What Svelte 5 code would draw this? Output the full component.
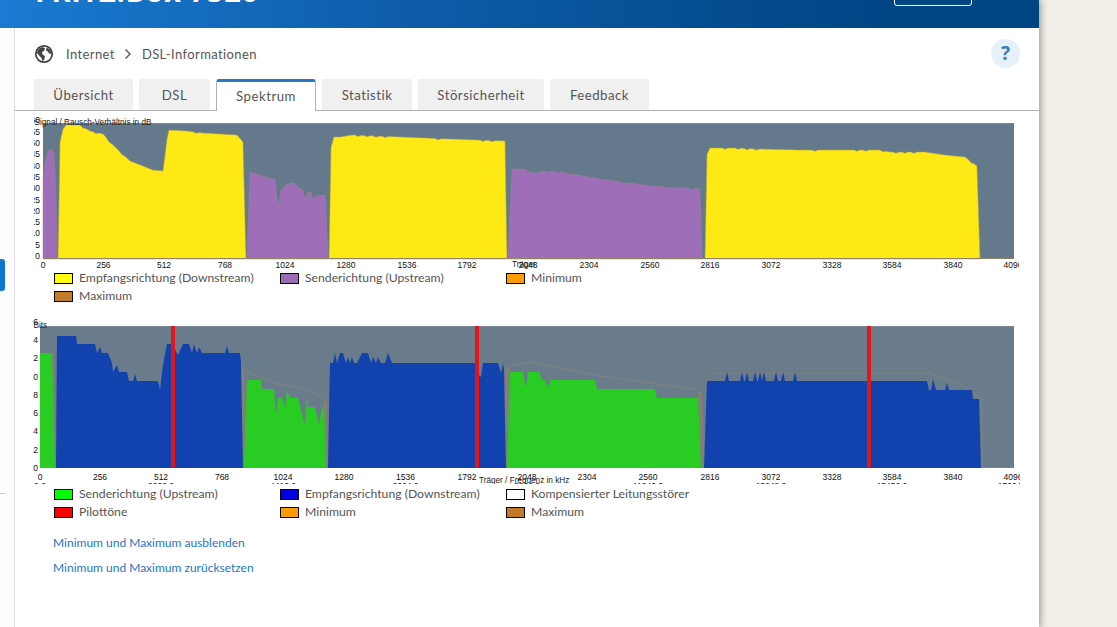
<script>
  // All chart coordinates are page pixels; each svg's viewBox maps them 1:1.
  const spikes = (list, base, top) =>
    list.flatMap((x) => [[x - 2, base], [x, top], [x + 2, base]]);

  // Adds the occasional small notch seen on the signal/noise curves
  function rough(points) {
    const out = [];
    let s = 7;
    for (let i = 0; i < points.length - 1; i++) {
      const [x0, y0] = points[i];
      const [x1, y1] = points[i + 1];
      out.push([x0, y0]);
      if (x1 - x0 > 8 && y0 < 250 && y1 < 250) {
        for (let x = x0 + 3; x < x1 - 1; x += 3) {
          s = (s * 31 + 11) % 97;
          const y = y0 + ((y1 - y0) * (x - x0)) / (x1 - x0);
          out.push([x, y + (s % 7 === 0 ? 1.2 : 0)]);
        }
      }
    }
    out.push(points[points.length - 1]);
    return out;
  }
  const str = (p) => p.map((q) => q.join(',')).join(' ');

  const snr = [
    { c: 'purple', p: [[43, 259], [43, 179], [45, 165], [48, 150], [53, 150], [55, 170], [56, 200], [57, 259]] },
    { c: 'yellow', p: rough([[58, 259], [60, 142], [63, 129], [66, 125], [80, 125], [90, 131], [103, 134], [113, 145], [130, 161], [143, 166], [153, 170], [163, 171], [167, 139], [169, 130], [187, 131], [203, 133], [237, 135], [243, 142], [246, 259]]) },
    { c: 'purple', p: rough([[247, 259], [250, 172], [263, 176], [275, 179], [277, 199], [279, 205], [281, 190], [287, 184], [293, 183], [303, 190], [305, 200], [308, 192], [311, 192], [313, 200], [316, 196], [325, 195], [326, 209], [328, 259]]) },
    { c: 'yellow', p: rough([[329, 259], [331, 147], [334, 137], [340, 137], [352, 135], [402, 137], [450, 139], [505, 141], [507, 259]]) },
    { c: 'purple', p: rough([[508, 259], [512, 169], [525, 169], [531, 173], [545, 171], [560, 172], [600, 179], [650, 186], [700, 189], [702, 259]]) },
    { c: 'yellow', p: rough([[705, 259], [707, 154], [710, 148], [735, 148], [760, 149], [800, 150], [880, 150], [890, 152], [925, 152], [945, 155], [965, 157], [977, 166], [980, 259]]) }
  ];

  const bits = [
    { c: 'green', p: [[40, 468], [40, 353], [52, 353], [55, 468]] },
    { c: 'blue', p: [[56, 468], [57, 336], [76, 336], [77, 344], [95, 344], [97, 353], [100, 347], [102, 353], [108, 353], [112, 363], [113, 372], [117, 365], [119, 372], [127, 372], [129, 381], [133, 381], [135, 374], [137, 381], [158, 381], [160, 390], [163, 365], [167, 344], [172, 344], [178, 355], [183, 344], [189, 344], [192, 353], [194, 344], [197, 353], [199, 347], [202, 353], [225, 353], [227, 346], [229, 353], [240, 353], [241, 362], [243, 468]] },
    { c: 'green', p: [[244, 468], [247, 380], [261, 380], [262, 389], [274, 389], [276, 415], [278, 398], [282, 398], [285, 407], [287, 391], [290, 398], [298, 398], [305, 425], [307, 398], [308, 407], [315, 407], [319, 425], [322, 407], [324, 407], [326, 468]] },
    { c: 'blue', p: [[328, 468], [330, 363], [333, 363], [335, 353], [337, 363], [340, 353], [343, 353], [346, 363], [348, 357], [350, 363], [352, 357], [354, 363], [357, 363], [362, 353], [368, 353], [371, 363], [373, 357], [376, 363], [378, 357], [381, 363], [385, 363], [388, 353], [392, 363], [475, 363], [477, 373], [481, 377], [483, 363], [498, 363], [501, 373], [503, 363], [504, 370], [506, 468]] },
    { c: 'green', p: [[507, 468], [510, 372], [523, 372], [526, 388], [528, 372], [539, 372], [542, 380], [545, 380], [548, 388], [550, 380], [595, 380], [597, 389], [655, 389], [657, 398], [698, 398], [701, 468]] },
    { c: 'blue', p: [[704, 468], [707, 381], ...spikes([727, 742, 747, 755, 760, 764, 776, 783, 795], 381, 372), [927, 381], [929, 390], [931, 390], [933, 379], [936, 390], [945, 390], [947, 383], [949, 390], [972, 390], [973, 399], [979, 399], [981, 468]] }
  ];
  const gaps = [
    [[52, 468], [52, 350], [54, 350], [56, 468]],
    [[241, 468], [241, 360], [244, 372], [248, 468]],
    [[324, 468], [324, 400], [327, 400], [329, 468]],
    [[503, 468], [505, 366], [510, 368], [508, 468]],
    [[698, 468], [698, 392], [702, 392], [705, 468]]
  ];
  const pilots = [173, 477, 869];
  const xTop = [[43, 0], [103.5, 256], [164, 512], [225, 768], [285, 1024], [346, 1280], [407, 1536], [467, 1792], [528, 2048], [589, 2304], [650, 2560], [710, 2816], [771, 3072], [832, 3328], [892, 3584], [953, 3840], [1013, 4096]];
  const xBot = [[40, 0], [100, 256], [161, 512], [222, 768], [283, 1024], [344, 1280], [405.5, 1536], [467, 1792], [527, 2048], [587, 2304], [648, 2560], [710, 2816], [771, 3072], [832, 3328], [892, 3584], [953, 3840], [1013, 4096]];
  const freq = [[40, '0.0'], [161, '2208.0'], [283, '4416.0'], [405.5, '6624.0'], [527, '8832.0'], [648, '11040.0'], [771, '13248.0'], [892, '15456.0'], [1013, '17664.0']];
  const yTop = [0, 5, 10, 15, 20, 25, 30, 35, 40, 45, 50, 55, 60];
  const yBot = [0, 2, 4, 6, 8, 10, 12, 14, 16];

  const tabs = [
    { t: 'Übersicht', w: 99 },
    { t: 'DSL', w: 71 },
    { t: 'Spektrum', w: 100, on: true },
    { t: 'Statistik', w: 90 },
    { t: 'Störsicherheit', w: 126 },
    { t: 'Feedback', w: 99 }
  ];
  const legend1 = [
    ['Empfangsrichtung (Downstream)', '#ffff00'],
    ['Senderichtung (Upstream)', '#9a6ab4'],
    ['Minimum', '#ff9a00'],
    ['Maximum', '#c07a28']
  ];
  const legend2 = [
    ['Senderichtung (Upstream)', '#00ff00'],
    ['Empfangsrichtung (Downstream)', '#0000e0'],
    ['Kompensierter Leitungsstörer', '#ffffff'],
    ['Pilottöne', '#ff0000'],
    ['Minimum', '#ff9a00'],
    ['Maximum', '#c07a28']
  ];
</script>

<div class="stage">
  <div class="page">
    <header class="top">
      <div class="brand">FRITZ!Box 7520</div>
      <div class="topbtn"></div>
    </header>
    <div class="body">
      <aside class="side">
        <div class="marker"></div>
        <div class="rule"></div>
      </aside>
      <main class="main">
        <div class="crumbs">
          <svg class="globe" viewBox="0 0 20 20" width="20" height="20" aria-hidden="true">
            <circle cx="10" cy="10" r="8.2" fill="#fff" stroke="#444" stroke-width="1.8" />
            <path d="M5 4.5 9 3l2 1.5-1 2.5-2 1 .5 2.5L11 12l-.5 3-2 2.500-1-3.500L5 11.500 2.800 8.500zM12.500 3.500l4 2.500 1 4-2.500-.5-1-2-2-1z" fill="#444" />
          </svg>
          <span>Internet</span>
          <svg class="chev" viewBox="0 0 8 12" width="8" height="12" aria-hidden="true">
            <path d="M1.500 1.500 6 6l-4.500 4.500" fill="none" stroke="#555" stroke-width="1.400" />
          </svg>
          <span>DSL-Informationen</span>
          <div class="help">?</div>
        </div>
        <nav class="tabs">
          {#each tabs as tab}
            <div class="tab" class:on={tab.on} style="width:{tab.w}px">{tab.t}</div>
          {/each}
        </nav>

        <svg class="chart one" viewBox="34 112 985 158" width="985" height="158">
          <rect x="43" y="123" width="971" height="136" fill="#647a8c" />
          <rect x="43" y="123" width="971" height="1" fill="#7c8a96" />
          {#each snr as s}
            <polygon class={s.c} points={str(s.p)} />
          {/each}
          <line x1="43" y1="258.500" x2="1014" y2="258.500" stroke="#8f8468" />
          {#each yTop as v, i}
            <text class="tick" x="40" y={259 - i * 11.300} text-anchor="end">{v}</text>
          {/each}
          {#each xTop as [x, v]}
            <text class="tick" {x} y="268" text-anchor="middle">{v}</text>
          {/each}
          <text class="tick cap" x="34.500" y="125">Signal / Rausch-Verhältnis in dB</text>
          <text class="tick cap" x="512" y="267">Träger</text>
        </svg>
        <div class="legend l1">
          {#each legend1 as [label, color]}
            <div class="item"><i style="background:{color}"></i>{label}</div>
          {/each}
        </div>

        <svg class="chart two" viewBox="33 318 987 166" width="987" height="166">
          <rect x="40" y="326" width="974" height="142" fill="#6a7b8c" />
          <rect x="40" y="326" width="974" height="1" fill="#808a94" />
          {#each gaps as g}
            <polygon points={str(g)} fill="#827f78" />
          {/each}
          <polyline class="max" points="707,373 930,373 960,384 982,399 982,467.500 1014,467.500" />
          <polyline class="max" points="247,372 262,378 274,383 300,388 326,398" />
          <polyline class="max" points="510,366 530,362 600,376 700,390" />
          {#each bits as s}
            <polygon class={s.c} points={str(s.p)} />
          {/each}
          {#each pilots as x}
            <rect x={x - 2} y="326" width="4" height="142" fill="#e2141c" />
          {/each}
          {#each yBot as v, i}
            <text class="tick" x="38" y={471 - i * 18.300} text-anchor="end">{v}</text>
          {/each}
          {#each xBot as [x, v]}
            <text class="tick" {x} y="480" text-anchor="middle">{v}</text>
          {/each}
          {#each freq as [x, v]}
            <text class="tick" {x} y="488.500" text-anchor="middle">{v}</text>
          {/each}
          <text class="tick cap" x="33.500" y="328">Bits</text>
          <text class="tick cap" x="479" y="483">Träger / Frequenz in kHz</text>
        </svg>
        <div class="legend l2">
          {#each legend2 as [label, color]}
            <div class="item"><i style="background:{color}"></i>{label}</div>
          {/each}
        </div>

        <div class="links">
          <a href="#a">Minimum und Maximum ausblenden</a>
          <a href="#b">Minimum und Maximum zurücksetzen</a>
        </div>
      </main>
    </div>
  </div>
</div>

<style>
  :global(body) {
    margin: 0;
    background: #f1eee8;
  }
  .stage {
    width: 1117px;
    height: 627px;
    overflow: hidden;
    font-family: Lato, "Noto Sans", sans-serif;
    color: #555;
  }
  .page {
    width: 1039px;
    height: 627px;
    background: #fff;
    box-shadow: 2px 0 6px rgba(70, 60, 50, 0.45);
    display: flex;
    flex-direction: column;
  }
  .top {
    height: 28px;
    flex: none;
    box-sizing: border-box;
    padding: 0 67px 22px 35px;
    background: linear-gradient(90deg, #1a7bd2 0%, #0d5ca8 40%, #004584 85%);
    display: flex;
    justify-content: space-between;
    align-items: flex-end;
    overflow: hidden;
  }
  .brand {
    flex: none;
    color: #fff;
    font: 700 29px/30px "Open Sans", sans-serif;
    letter-spacing: 0.65px;
  }
  .topbtn {
    flex: none;
    width: 78px;
    height: 30px;
    box-sizing: border-box;
    border: 1px solid #fff;
    border-radius: 3px;
  }
  .body {
    flex: 1;
    display: flex;
    min-height: 0;
  }
  .side {
    flex: none;
    width: 14px;
    background: #fdfdfd;
    border-right: 1px solid #dcdcdc;
    padding-top: 231px;
  }
  .marker {
    width: 5px;
    height: 32px;
    background: #1176d0;
    border-radius: 0 3px 3px 0;
  }
  .rule {
    width: 5px;
    height: 1px;
    margin-top: 202px;
    background: #ccc;
  }
  .main {
    flex: 1;
    min-width: 0;
  }
  .crumbs {
    height: 51px;
    box-sizing: border-box;
    padding: 0 19px;
    display: flex;
    align-items: center;
    font-size: 13px;
    letter-spacing: 0.4px;
    color: #555;
  }
  .crumbs span:first-of-type {
    margin-left: 12px;
  }
  .chev {
    margin: 0 10px 0 9px;
  }
  .help {
    margin-left: auto;
    width: 29px;
    height: 29px;
    border-radius: 50%;
    background: #e6f0f9;
    color: #3a7cc0;
    font: 700 19px/29px "Noto Sans", sans-serif;
    letter-spacing: 0;
    text-align: center;
  }
  .tabs {
    display: flex;
    gap: 6px;
    height: 32px;
    box-sizing: border-box;
    padding-left: 19px;
    border-bottom: 1px solid #b0b0b0;
  }
  .tab {
    height: 31px;
    box-sizing: border-box;
    padding-top: 8px;
    text-align: center;
    font-size: 13.200px;
    letter-spacing: 0.5px;
    background: #f0f0f0;
    border-radius: 3px 3px 0 0;
  }
  .tab.on {
    height: 32px;
    padding-top: 6px;
    background: #fff;
    border: 1px solid #b0b0b0;
    border-top: 3px solid #2a78c4;
    border-bottom: none;
  }
  .chart {
    display: block;
    margin-left: 19px;
  }
  .one {
    margin-top: 1px;
  }
  .two {
    margin-left: 18px;
    margin-top: 13px;
  }
  .yellow { fill: #ffe914; stroke: #a89c50; stroke-width: 0.5; }
  .purple { fill: #9e6fb8; stroke: #a08090; stroke-width: 0.5; }
  .green { fill: #29cc23; }
  .blue { fill: #1242ad; }
  .max {
    fill: none;
    stroke: #8f8a6e;
    stroke-width: 1.200;
    stroke-opacity: 0.6;
  }
  .tick {
    font: 8.500px "Liberation Sans", Arial, sans-serif;
    fill: #111;
  }
  .cap {
    font-size: 8.200px;
    fill: #222;
  }
  .legend {
    display: grid;
    grid-template-columns: repeat(3, 226px);
    grid-auto-rows: 18px;
    margin-left: 39px;
    font-size: 12.200px;
    line-height: 18px;
    color: #555;
  }
  .l1 {
    margin-top: -1px;
    height: 36px;
  }
  .l2 {
    margin-top: 1px;
  }
  .item {
    display: flex;
    align-items: center;
    white-space: nowrap;
  }
  .item i {
    width: 19px;
    height: 11px;
    box-sizing: border-box;
    border: 1px solid #000;
    margin-right: 6px;
    flex: none;
  }
  .links {
    display: flex;
    flex-direction: column;
    gap: 7px;
    margin: 13px 0 0 38px;
    font-size: 12px;
    line-height: 18px;
  }
  .links a {
    color: #1f76c4;
    text-decoration: none;
  }
</style>
